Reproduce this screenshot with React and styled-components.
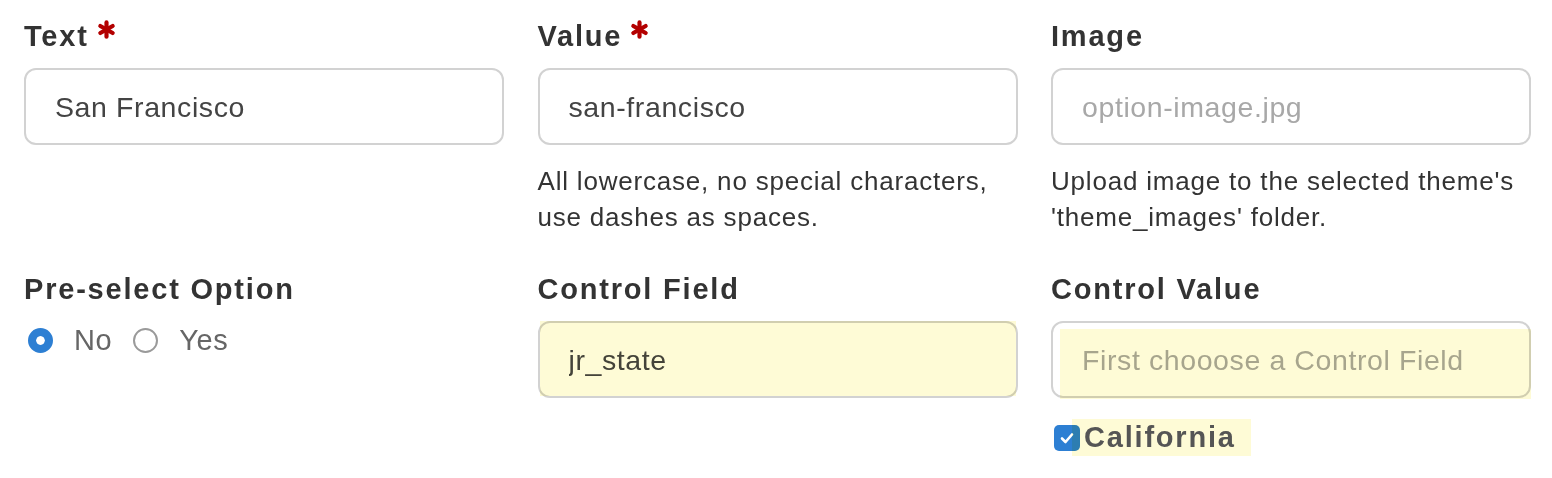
import styled, { createGlobalStyle } from 'styled-components'

const GlobalStyle = createGlobalStyle`
    body {
        margin: 0;
        background: #fff;
        font-family: 'Liberation Sans', Arial, sans-serif;
    }
`;

const Page = styled.div`
    padding: 18px 0 0 24px;
`;

const Grid = styled.div`
    display: grid;
    grid-template-columns: repeat(3, 480px);
    column-gap: 33.5px;
    row-gap: 36px;
`;

const Field = styled.div`
    display: flex;
    flex-direction: column;
`;

const Label = styled.div`
    display: flex;
    align-items: flex-start;
    font-size: 29px;
    font-weight: bold;
    letter-spacing: 1.8px;
    line-height: 36px;
    color: #333;
    margin-bottom: 14px;
`;

const Star = styled.svg`
    width: 19px;
    height: 19px;
    margin-left: 8px;
    margin-top: 1.5px;
`;

const InputWrap = styled.div`
    position: relative;
`;

const Input = styled.input`
    box-sizing: border-box;
    display: block;
    width: 100%;
    height: 77px;
    margin: 0;
    padding: 2px 28px 0 29px;
    border: 2px solid #d2d2d2;
    border-radius: 12px;
    background: #fff;
    font-family: 'Liberation Sans', Arial, sans-serif;
    font-size: 28.5px;
    letter-spacing: 0.6px;
    color: #444;
    outline: none;

    &::placeholder {
        color: #a8a8a8;
        opacity: 1;
    }
`;

const Highlight = styled.span`
    position: absolute;
    top: ${p => p.$top}px;
    left: ${p => p.$left}px;
    right: ${p => p.$right}px;
    bottom: ${p => p.$bottom}px;
    background: #fefbd6;
    mix-blend-mode: multiply;
    pointer-events: none;
`;

const Help = styled.div`
    margin-top: 18px;
    font-size: 26px;
    letter-spacing: 0.8px;
    line-height: 36px;
    color: #333;
`;

const RadioGroup = styled.div`
    display: flex;
    align-items: center;
    height: 38px;
    padding-left: 4px;
`;

const RadioDot = styled.span`
    box-sizing: border-box;
    width: 25px;
    height: 25px;
    border-radius: 50%;
    flex-shrink: 0;
    background: ${p => (p.$checked ? '#2d7fd3' : '#fff')};
    border: ${p => (p.$checked ? '8px solid #2d7fd3' : '2px solid #9a9a9a')};
    box-shadow: ${p => (p.$checked ? 'inset 0 0 0 5px #fff' : 'none')};
`;

const RadioText = styled.span`
    font-size: 29px;
    letter-spacing: 0.6px;
    line-height: 38px;
    color: #666;
    margin: 0 21px 0 21px;
`;

const CheckRow = styled.div`
    display: flex;
    align-items: center;
    margin-top: 21px;
    padding-left: 3px;
`;

const Checkbox = styled.span`
    display: flex;
    align-items: center;
    justify-content: center;
    width: 26px;
    height: 26px;
    border-radius: 5px;
    background: #2d7fd3;
    flex-shrink: 0;
`;

const CheckLabel = styled.span`
    margin-left: -8px;
    padding: 0 15px 0 12px;
    font-size: 29px;
    font-weight: bold;
    letter-spacing: 1.8px;
    line-height: 37px;
    color: #555;
    background: #fefbd6;
    mix-blend-mode: multiply;
`;

const Asterisk = () => (
    <Star viewBox="0 0 20 20">
        <g stroke="#b30000" strokeWidth="4.4" strokeLinecap="round">
            <line x1="10" y1="2.5" x2="10" y2="17.5" />
            <line x1="3.5" y1="6.25" x2="16.5" y2="13.75" />
            <line x1="3.5" y1="13.75" x2="16.5" y2="6.25" />
        </g>
    </Star>
);

const App = () => {
    return (
        <>
            <GlobalStyle />
            <Page>
                <Grid>
                    <Field>
                        <Label>Text<Asterisk /></Label>
                        <Input readOnly defaultValue="San Francisco" />
                    </Field>
                    <Field>
                        <Label>Value<Asterisk /></Label>
                        <Input readOnly defaultValue="san-francisco" />
                        <Help>All lowercase, no special characters, use dashes as spaces.</Help>
                    </Field>
                    <Field>
                        <Label>Image</Label>
                        <Input readOnly placeholder="option-image.jpg" />
                        <Help>Upload image to the selected theme's 'theme_images' folder.</Help>
                    </Field>

                    <Field>
                        <Label>Pre-select Option</Label>
                        <RadioGroup>
                            <RadioDot $checked />
                            <RadioText>No</RadioText>
                            <RadioDot />
                            <RadioText>Yes</RadioText>
                        </RadioGroup>
                    </Field>
                    <Field>
                        <Label>Control Field</Label>
                        <InputWrap>
                            <Input readOnly defaultValue="jr_state" />
                            <Highlight $top={0} $left={2} $right={2} $bottom={2} />
                        </InputWrap>
                    </Field>
                    <Field>
                        <Label>Control Value</Label>
                        <InputWrap>
                            <Input readOnly placeholder="First chooose a Control Field" />
                            <Highlight $top={8} $left={9} $right={0} $bottom={-1} />
                        </InputWrap>
                        <CheckRow>
                            <Checkbox>
                                <svg width="16" height="16" viewBox="0 0 16 16">
                                    <path d="M3 8.5 L6.5 12 L13 4.5" fill="none" stroke="#fff" strokeWidth="2.6" strokeLinecap="round" strokeLinejoin="round" />
                                </svg>
                            </Checkbox>
                            <CheckLabel>California</CheckLabel>
                        </CheckRow>
                    </Field>
                </Grid>
            </Page>
        </>
    )
}

export default App
